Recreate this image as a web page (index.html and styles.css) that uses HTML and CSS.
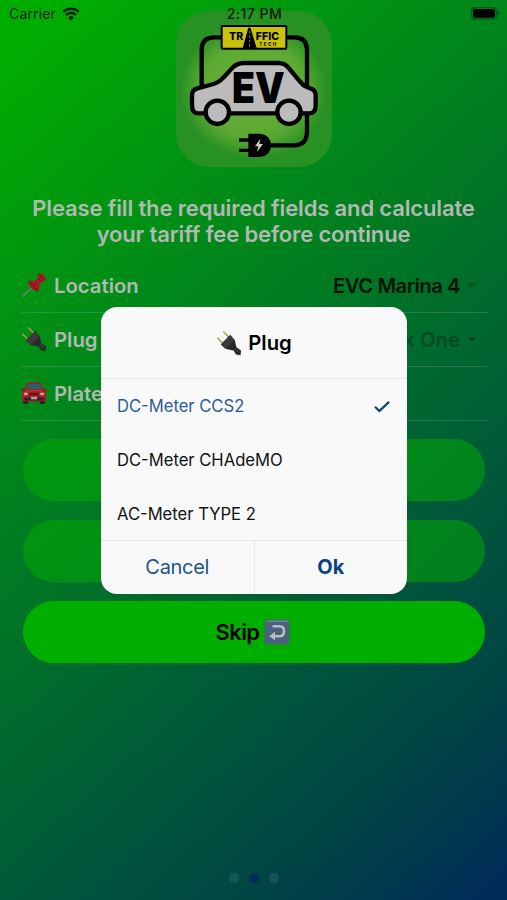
FILE: index.html
```
<!DOCTYPE html>
<html lang="en">

<head>
  <meta charset="UTF-8">
  <meta name="viewport" content="width=device-width, initial-scale=1.0">
  <title>EV Charging</title>
  <link rel="stylesheet" href="styles.css">
</head>

<body>
  <!-- shared icons -->
  <svg class="sprite" width="0" height="0">
    <symbol id="plug" viewBox="0 0 26 26">
      <path d="M1.2 7.8 7.5 14M7.3 1.6 13.5 8" stroke="#aaa044" stroke-width="1.5" />
      <path d="M14.2 5 18.8 10.2 20.3 17 25 20.5 24.6 25.3 20 24.6 17.5 20.4 10 19 4.8 14.6Z" fill="#29292b" />
      <path d="M14.2 5 18.8 10.2 9.6 18.7 4.8 14.6Z" fill="#3a3a3d" />
      <path d="M18.5 19.5 21 17.5M20.3 22 23.2 19.4" stroke="#55555a" stroke-width=".8" />
    </symbol>
  </svg>

  <div class="page">
    <div class="status-bar">
      <div class="carrier">
        <span>Carrier</span>
        <svg class="wifi" viewBox="0 0 18 14">
          <path d="M1.2 4.9a11.2 11.2 0 0 1 15.6 0M4 8a7.2 7.2 0 0 1 10 0" fill="none" stroke="#001d00" stroke-width="2.3" />
          <path d="M6.2 10.5a4 4 0 0 1 5.6 0L9 13.6z" fill="#001d00" />
        </svg>
      </div>
      <div class="time">2:17 PM</div>
      <div class="battery">
        <svg viewBox="0 0 29 13">
          <rect x=".6" y=".6" width="24.8" height="11.6" rx="3.4" fill="none" stroke="#00551a" stroke-width="1.2" />
          <rect x="2" y="2" width="22" height="8.8" rx="2" fill="#000" />
          <path d="M26.7 4.2q1.7.6 1.7 2.2t-1.7 2.2z" fill="#00551a" />
        </svg>
      </div>
    </div>

    <svg class="logo" viewBox="18 18 468 468">
      <defs>
        <radialGradient id="glow">
          <stop offset="0" stop-color="#69b037" />
          <stop offset=".7" stop-color="#5ca932" />
          <stop offset="1" stop-color="#289123" />
        </radialGradient>
      </defs>
      <rect x="18" y="18" width="468" height="468" rx="100" fill="#289123" />
      <ellipse cx="250" cy="255" rx="220" ry="205" fill="url(#glow)" />
      <g fill="none" stroke="#000" stroke-width="13">
        <path d="M157 97H133Q95 97 95 135V250M347 97H374Q411 97 411 135V250M411 320V380Q411 421 370 421H295" />
        <path d="M87 325Q66 325 66 302V270Q66 255 82 250L120 240Q145 235 160 218L185 191Q200 174 222 174H325Q345 174 357 190L390 230Q399 242 412 247L424 251Q437 256 437 271V302Q437 325 416 325Z" fill="#bbb" />
        <circle cx="142" cy="322" r="35" fill="#bbb" />
        <circle cx="357" cy="322" r="35" fill="#bbb" />
      </g>
      <rect x="155" y="63" width="194" height="68" rx="3" fill="#c9c20b" stroke="#000" stroke-width="6" />
      <path d="M235 68H241L260 129H218Z" />
      <path d="M239 78V128" stroke="#bbb" stroke-width="2" stroke-dasharray="8 5" />
      <text class="sign-text">
        <tspan x="177" y="106">TR</tspan><tspan x="257" y="106">FFIC</tspan><tspan class="sign-small" x="268" y="124">TECH</tspan>
      </text>
      <text class="ev-text" x="186" y="293" textLength="158" lengthAdjust="spacingAndGlyphs">EV</text>
      <path d="M207 405H240M207 436H240" stroke="#000" stroke-width="10" />
      <path d="M235 386H271Q303 390 303 421T271 456H235Z" />
      <path d="M271 401 255 424H265L261 441 279 417H268Z" fill="#ccc" />
    </svg>

    <h1 class="title">
      Please fill the required fields and calculate<br>
      your tariff fee before continue
    </h1>

    <div class="form">
      <div class="row">
        <svg class="emoji" viewBox="0 0 26 26">
          <path d="M1.5 24.6 12.2 14" stroke="#777b7b" stroke-width="1.5" />
          <path d="M17.5 1.6Q20.5.2 23.2 3.5T24.1 8.8L20.6 10 17.9 13.7Q19.4 17.5 16.6 19.4 13.3 18.8 10.2 16 7.1 12.7 7 9.6 9.7 7.6 13.2 9.3L17.1 6Z" fill="#a91622" />
          <path d="M17.5 1.6Q20 3 20.6 4.6T24.1 8.8M7.2 9.6Q12 12 16.6 19.4M17.4 6.1 20.5 9.8" fill="none" stroke="#71101a" stroke-width="1" />
        </svg>
        <span class="label">Location</span>
        <span class="value">EVC Marina 4</span>
        <span class="arrow arrow-dim"></span>
      </div>
      <div class="row">
        <svg class="emoji"><use href="#plug" /></svg>
        <span class="label">Plug</span>
        <span class="value placeholder">Pick One</span>
        <span class="arrow"></span>
      </div>
      <div class="row">
        <svg class="emoji" viewBox="0 0 26 26">
          <rect x="2" y="18" width="5.2" height="5.8" rx="1.4" fill="#181b20" />
          <rect x="18.8" y="18" width="5.2" height="5.8" rx="1.4" fill="#181b20" />
          <path d="M6.2 2.8Q13 1 19.8 2.8L22.2 9.5 25 11.5V20Q25 21.4 23.4 21.4H2.6Q1 21.4 1 20V11.5L3.8 9.5Z" fill="#a51c22" />
          <path d="M7.3 4.2Q13 3 18.7 4.2L20.5 9.5Q13 8.6 5.5 9.5Z" fill="#24616f" />
          <path d="M.7 8.5H3.8V10.7H.7ZM22.2 8.5H25.3V10.7H22.2Z" fill="#8d1a20" />
          <path d="M5 11.2Q13 9.8 21 11.2" fill="none" stroke="#d13a35" />
          <ellipse cx="4.8" cy="14" rx="2.3" ry="1.4" fill="#b9a496" />
          <ellipse cx="21.2" cy="14" rx="2.3" ry="1.4" fill="#b9a496" />
          <rect x="8.5" y="13.1" width="9" height="1.8" rx=".9" fill="#58151a" />
          <rect x="3" y="17.5" width="20" height="3" rx="1.4" fill="#31232a" />
          <rect x="10" y="16.8" width="6" height="2.5" fill="#aaa" />
        </svg>
        <span class="label">Plate</span>
      </div>
    </div>

    <div class="buttons">
      <button class="button" disabled></button>
      <button class="button" disabled></button>
      <button class="button">
        <span>Skip</span>
        <svg class="skip-icon" viewBox="0 0 26 26">
          <rect x=".5" y=".5" width="25" height="25" rx="4" fill="#4b607b" />
          <path d="M3 2.2H23" stroke="#71839a" stroke-width="1.5" stroke-linecap="round" />
          <path d="M8.5 7.2H15.5Q20 7.2 20 12.2T15.5 17.2H9" fill="none" stroke="#b8bcc2" stroke-width="2.6" />
          <path d="M5.2 17.2 11 12.8V21.2Z" fill="#b8bcc2" />
        </svg>
      </button>
    </div>

    <div class="pager">
      <span class="dot"></span>
      <span class="dot active"></span>
      <span class="dot"></span>
    </div>

    <div class="alert">
      <div class="alert-head">
        <svg class="emoji"><use href="#plug" /></svg>
        <span>Plug</span>
      </div>
      <div class="alert-list">
        <div class="option selected">
          <span>DC-Meter CCS2</span>
          <svg class="check" viewBox="0 0 16 13">
            <path d="M1 6.7 5.4 11 15 1.8" fill="none" stroke="#0b437f" stroke-width="2.3" />
          </svg>
        </div>
        <div class="option"><span>DC-Meter CHAdeMO</span></div>
        <div class="option"><span>AC-Meter TYPE 2</span></div>
      </div>
      <div class="alert-buttons">
        <button class="alert-button">Cancel</button>
        <button class="alert-button ok">Ok</button>
      </div>
    </div>
  </div>
</body>

</html>
```
FILE: styles.css
```
* {
  box-sizing: border-box;
}

html,
body {
  margin: 0;
  padding: 0;
  font-family: Inter, "Liberation Sans", sans-serif;
}

button {
  font-family: inherit;
  border: none;
  padding: 0;
}

.sprite {
  position: absolute;
}

.page {
  position: relative;
  display: flex;
  flex-direction: column;
  width: 507px;
  height: 900px;
  overflow: hidden;
  background: linear-gradient(138deg, #00ae00 4%, #005a38 66%, #003f48 87%, #002b59 99%);
}

.status-bar {
  display: grid;
  grid-template-columns: 1fr auto 1fr;
  align-items: center;
  height: 27px;
  padding: 0 7px 0 9px;
  font-size: 14px;
  color: #001d00;
  position: relative;
  z-index: 1;
}

.carrier {
  display: flex;
  align-items: center;
  gap: 6px;
  letter-spacing: 0.15px;
}

.wifi {
  width: 18px;
  height: 14px;
}

.time {
  font-weight: 500;
  letter-spacing: 0.5px;
}

.battery {
  display: flex;
  justify-content: flex-end;
}

.battery svg {
  width: 29px;
  height: 13px;
}

.logo {
  display: block;
  flex: none;
  width: 156px;
  height: 156px;
  margin: -16px auto 0;
}

.sign-text {
  font-size: 32px;
  font-weight: 800;
}

.sign-small {
  font-size: 14px;
  font-weight: 700;
  letter-spacing: 4px;
}

.ev-text {
  font-size: 126px;
  font-weight: 900;
}

.title {
  margin: 29px 0 0;
  font-size: 22px;
  font-weight: 600;
  line-height: 25.5px;
  letter-spacing: -0.15px;
  text-align: center;
  white-space: nowrap;
  color: #b2b9b2;
}

.form {
  margin: 12px 20px 0 21px;
}

.row {
  display: flex;
  align-items: center;
  height: 54px;
  padding: 0 11px 1px 0;
  border-bottom: 1px solid rgba(150, 170, 160, 0.28);
  font-size: 20.3px;
  font-weight: 600;
}

.emoji {
  width: 26px;
  height: 26px;
  flex: none;
}

.label {
  margin-left: 7px;
  color: #b2b9b2;
}

.value {
  margin-left: auto;
  letter-spacing: -0.5px;
  color: #001400;
}

.placeholder {
  letter-spacing: 0;
  color: #004d1c;
}

.arrow {
  margin-left: 8px;
  border: 4px solid transparent;
  border-top: 5px solid #00451c;
  border-bottom: 0;
}

.arrow-dim {
  border-top-color: #00571f;
}

.buttons {
  display: flex;
  flex-direction: column;
  gap: 19px;
  margin: 18px 22px 0 23px;
}

.button {
  display: flex;
  align-items: center;
  justify-content: center;
  gap: 5px;
  height: 62px;
  padding-right: 2px;
  border-radius: 31px;
  background: #00ae00;
  font-size: 22px;
  font-weight: 600;
  letter-spacing: -0.6px;
  color: #000;
}

.button:disabled {
  opacity: 0.5;
}

.skip-icon {
  width: 26px;
  height: 26px;
}

.pager {
  display: flex;
  justify-content: center;
  gap: 10px;
  margin: auto 0 17px;
}

.dot {
  width: 10px;
  height: 10px;
  border-radius: 50%;
  background: #155653;
}

.dot.active {
  background: #002b5c;
}

/* alert sits over the form */
.alert {
  position: absolute;
  top: 307px;
  left: 101px;
  width: 306px;
  height: 287px;
  border-radius: 16px;
  background: #f9f9f9;
  overflow: hidden;
}

.alert-head {
  display: flex;
  align-items: center;
  justify-content: center;
  gap: 6px;
  height: 72px;
  border-bottom: 1px solid #e6e6e6;
  font-size: 20.3px;
  font-weight: 600;
}

.option {
  display: flex;
  align-items: center;
  justify-content: space-between;
  height: 54px;
  padding: 0 17px 0 16px;
  font-size: 16.6px;
  color: #111;
}

.option:last-child {
  height: 53px;
}

.selected {
  color: #2b5d94;
}

.check {
  width: 16px;
  height: 13px;
}

.alert-buttons {
  display: flex;
  height: 54px;
  border-top: 1px solid #e6e6e6;
}

.alert-button {
  flex: 1;
  padding-bottom: 1px;
  background: none;
  font-size: 20px;
  letter-spacing: -0.3px;
  color: #225488;
}

.alert-button.ok {
  border-left: 1px solid #e6e6e6;
  font-weight: 700;
  letter-spacing: 0;
  color: #0b437f;
}
```
